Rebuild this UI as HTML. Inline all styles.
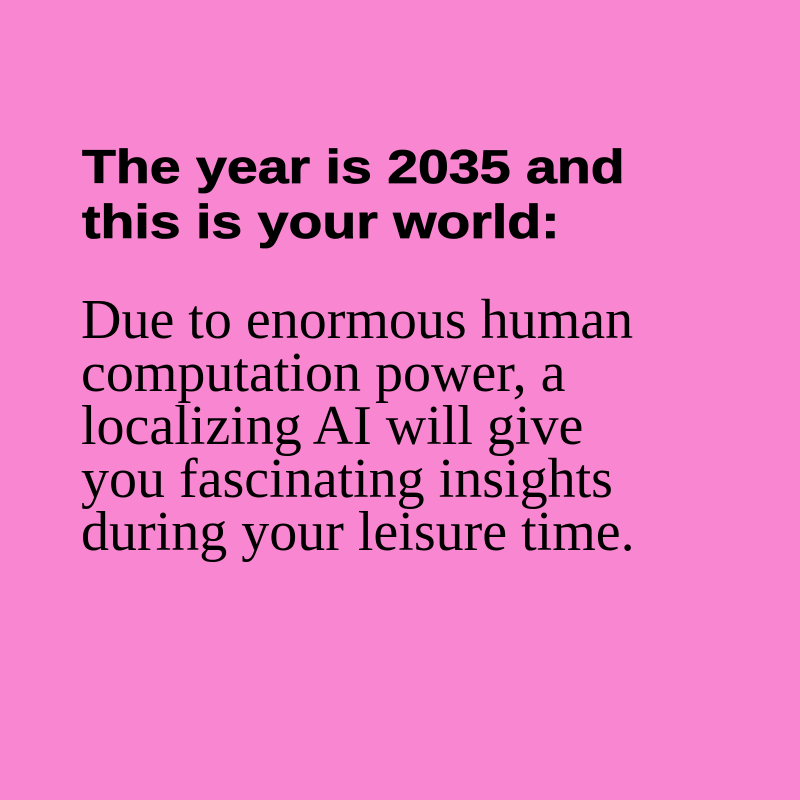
<!DOCTYPE html>
<html><head><style>
html,body{margin:0;padding:0;}
body{width:800px;height:800px;background:#f986d0;position:relative;overflow:hidden;}
h1{position:absolute;left:82px;top:139px;margin:0;font:bold 47px/55px "Liberation Sans",sans-serif;color:#000;transform:scaleX(1.18);transform-origin:0 0;white-space:nowrap;-webkit-text-stroke:0.8px #000;}
p{position:absolute;left:81px;top:294px;margin:0;font:56px/53px "Liberation Serif",serif;color:#000;white-space:nowrap;}
</style></head><body>
<h1>The year is 2035 and<br>this is your world:</h1>
<p>Due to enormous human<br>computation power, a<br>localizing AI will give<br>you fascinating insights<br>during your leisure time.</p>
</body></html>
